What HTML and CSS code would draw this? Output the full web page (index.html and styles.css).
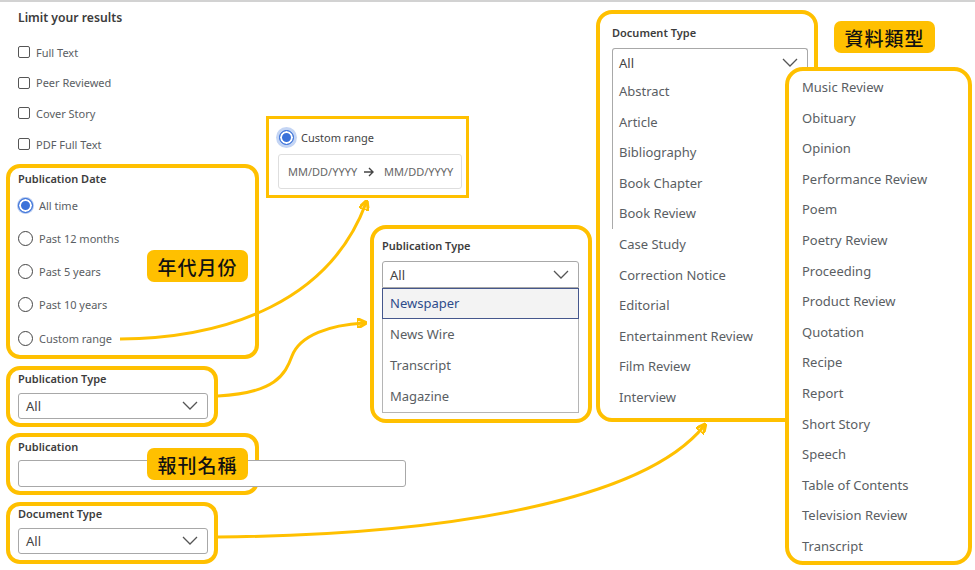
FILE: index.html
```html
<!DOCTYPE html>
<html>

<head>
    <title>Limit your results</title>
    <link rel="stylesheet" href="styles.css">
</head>

<body>
    <div class="page">
        <div class="filters">
            <h3 class="title">Limit your results</h3>
            <ul class="checks">
                <li><span class="check"></span>Full Text</li>
                <li><span class="check"></span>Peer Reviewed</li>
                <li><span class="check"></span>Cover Story</li>
                <li><span class="check"></span>PDF Full Text</li>
            </ul>

            <div class="mark date-box">
                <div class="field-label">Publication Date</div>
                <ul class="radios">
                    <li><span class="radio on"></span>All time</li>
                    <li><span class="radio"></span>Past 12 months</li>
                    <li><span class="radio"></span>Past 5 years</li>
                    <li><span class="radio"></span>Past 10 years</li>
                    <li><span class="radio"></span>Custom range</li>
                </ul>
            </div>

            <div class="mark type-box">
                <div class="field-label">Publication Type</div>
                <div class="select">All
                    <svg class="chev" viewBox="0 0 16 9"><path d="M1 1l7 7 7-7" /></svg>
                </div>
            </div>

            <div class="mark pub-box">
                <div class="field-label">Publication</div>
                <div class="text-input"></div>
            </div>

            <div class="mark doc-box">
                <div class="field-label">Document Type</div>
                <div class="select">All
                    <svg class="chev" viewBox="0 0 16 9"><path d="M1 1l7 7 7-7" /></svg>
                </div>
            </div>
        </div>

        <!-- callouts -->
        <div class="popup range-pop">
            <div class="range-head"><span class="radio on halo"></span>Custom range</div>
            <div class="range-input">
                <span>MM/DD/YYYY</span>
                <svg class="to" viewBox="0 0 10 10"><path d="M0 5h9M5 1l4 4-4 4" /></svg>
                <span>MM/DD/YYYY</span>
            </div>
        </div>

        <div class="popup ptype-pop">
            <div class="field-label">Publication Type</div>
            <div class="select">All
                <svg class="chev" viewBox="0 0 16 9"><path d="M1 1l7 7 7-7" /></svg>
            </div>
            <ul class="opts">
                <li class="active">Newspaper</li>
                <li>News Wire</li>
                <li>Transcript</li>
                <li>Magazine</li>
            </ul>
        </div>

        <div class="popup dtype-pop">
            <div class="field-label">Document Type</div>
            <div class="select open">All
                <svg class="chev" viewBox="0 0 16 9"><path d="M1 1l7 7 7-7" /></svg>
            </div>
            <ul class="doc-list edged">
                <li>Abstract</li>
                <li>Article</li>
                <li>Bibliography</li>
                <li>Book Chapter</li>
                <li>Book Review</li>
            </ul>
            <ul class="doc-list">
                <li>Case Study</li>
                <li>Correction Notice</li>
                <li>Editorial</li>
                <li>Entertainment Review</li>
                <li>Film Review</li>
                <li>Interview</li>
            </ul>
        </div>

        <div class="popup more-pop">
            <ul class="doc-list">
                <li>Music Review</li>
                <li>Obituary</li>
                <li>Opinion</li>
                <li>Performance Review</li>
                <li>Poem</li>
                <li>Poetry Review</li>
                <li>Proceeding</li>
                <li>Product Review</li>
                <li>Quotation</li>
                <li>Recipe</li>
                <li>Report</li>
                <li>Short Story</li>
                <li>Speech</li>
                <li>Table of Contents</li>
                <li>Television Review</li>
                <li>Transcript</li>
            </ul>
        </div>

        <span class="tag tag-date">年代月份</span>
        <span class="tag tag-pub">報刊名稱</span>
        <span class="tag tag-doc">資料類型</span>

        <svg class="arrows" viewBox="0 0 975 570">
            <defs>
                <marker id="head" viewBox="0 0 10 10" refX="7" refY="5" markerWidth="3.4" markerHeight="3.4" orient="auto">
                    <path d="M0 0L10 5L0 10z" fill="#ffc000" />
                </marker>
            </defs>
            <path d="M120 339C230 338 330 300 366 203" marker-end="url(#head)" />
            <path d="M218 396C275 393 285 375 292 356C300 335 330 325 364 323" marker-end="url(#head)" />
            <path d="M218 537C430 535 640 505 704 426" marker-end="url(#head)" />
        </svg>
    </div>
</body>

</html>
```

FILE: styles.css
```css
body {
    margin: 0;
    background-color: #fff;
    font-family: "Noto Sans", "Open Sans", sans-serif;
    color: #5a5e63;
}

ul {
    list-style: none;
    margin: 0;
    padding: 0;
}

.page {
    position: relative;
    width: 975px;
    height: 570px;
    overflow: hidden;
    box-shadow: inset 0 2px 0 #d2d2d2;
}

/* left column */

.filters {
    width: 420px;
    padding: 10px 0 0 6px;
}

.title {
    margin: 0 0 0 12px;
    font-size: 12.2px;
    line-height: 16px;
    font-weight: 600;
    color: #3c3c3c;
}

.checks {
    margin: 11px 0 0 12px;
}

.checks li,
.radios li {
    display: flex;
    align-items: center;
    font-size: 11px;
}

.checks li {
    height: 30.6px;
}

.radios li {
    height: 33.25px;
}

.check {
    width: 12px;
    height: 12px;
    margin-right: 6px;
    border: 1.5px solid #555;
    border-radius: 2px;
    box-sizing: border-box;
}

.radio {
    width: 15px;
    height: 15px;
    margin-right: 6px;
    border: 1.5px solid #444;
    border-radius: 50%;
    box-sizing: border-box;
    flex-shrink: 0;
}

.radio.on {
    border-color: #3b72d9;
    background-color: #3b72d9;
    box-shadow: inset 0 0 0 2px #fff, 0 0 0 1px #b3c8f0;
}

.radio.halo {
    box-shadow: inset 0 0 0 2px #fff, 0 0 0 3px #c4d5f4;
}

.field-label {
    font-size: 11px;
    line-height: 14px;
    font-weight: 600;
    color: #3d3d3d;
}

.mark {
    border: 4px solid #ffc000;
    border-radius: 14px;
    background-color: #fff;
    box-sizing: border-box;
}

.date-box {
    width: 253px;
    margin-top: 5px;
    padding: 4px 8px 0;
}

.date-box .field-label {
    margin-bottom: 2px;
}

.type-box {
    width: 212px;
    margin-top: 7px;
    padding: 2px 6px 4px 8px;
}

.type-box .field-label,
.doc-box .field-label {
    margin-bottom: 7px;
}

.pub-box {
    width: 253px;
    margin-top: 6px;
    padding: 3px 8px 4px;
}

.pub-box .field-label {
    margin-bottom: 6px;
}

.doc-box {
    width: 212px;
    margin-top: 7px;
    padding: 1px 6px 6px 8px;
}

.select {
    display: flex;
    align-items: center;
    justify-content: space-between;
    height: 26px;
    padding: 0 9px 0 7px;
    border: 1px solid #a8a8a8;
    border-radius: 3px;
    box-sizing: border-box;
    background-color: #fff;
    font-size: 13px;
    color: #444;
}

.chev {
    width: 16px;
    height: 9px;
    fill: none;
    stroke: #555;
    stroke-width: 1.3;
}

.text-input {
    width: 388px;
    height: 27px;
    border: 1px solid #a8a8a8;
    border-radius: 3px;
    box-sizing: border-box;
    background-color: #fff;
}

/* callouts */

.popup {
    position: absolute;
    background-color: #fff;
    border: 4px solid #ffc000;
    border-radius: 16px;
    box-sizing: border-box;
}

.range-pop {
    left: 266px;
    top: 116px;
    width: 203px;
    height: 82px;
    padding: 10px 7px 0 10px;
    border-width: 3px;
    border-radius: 0;
}

.range-head {
    display: flex;
    align-items: center;
    height: 16px;
    font-size: 11px;
    color: #444;
}

.range-head .radio {
    margin-right: 7px;
}

.range-input {
    display: flex;
    align-items: center;
    width: 184px;
    height: 35px;
    margin: 9px 0 0 -1px;
    padding-left: 9px;
    border: 1px solid #dedede;
    border-radius: 3px;
    box-sizing: border-box;
    font-size: 11px;
    color: #666;
    white-space: nowrap;
    overflow: hidden;
}

.range-input .to {
    width: 10px;
    height: 10px;
    margin: 0 10px 0 7px;
    fill: none;
    stroke: #444;
    stroke-width: 1.4;
    flex-shrink: 0;
}

.ptype-pop {
    left: 370px;
    top: 225px;
    width: 222px;
    height: 198px;
    padding: 10px 9px 0 8px;
}

.ptype-pop .field-label {
    margin-bottom: 8px;
}

.ptype-pop .select {
    height: 27px;
    border-radius: 3px 3px 0 0;
}

.opts {
    border: 1px solid #b5b5b5;
    border-top: none;
}

.opts li {
    height: 31px;
    line-height: 31px;
    padding-left: 7px;
    font-size: 13px;
}

.opts li.active {
    margin: 0 -1px;
    padding-left: 7px;
    border: 1.5px solid #45578c;
    background-color: #f3f3f3;
    box-sizing: border-box;
    line-height: 28px;
    color: #2e4c8b;
}

.dtype-pop {
    left: 596px;
    top: 10px;
    width: 222px;
    height: 412px;
    padding: 12px 6px 0 12px;
}

.dtype-pop .field-label {
    margin-bottom: 8px;
}

.select.open {
    height: 28px;
    padding-left: 6px;
    border-bottom: none;
    border-radius: 3px 3px 0 0;
}

.doc-list li {
    height: 30.6px;
    line-height: 30.6px;
    padding-left: 7px;
    font-size: 13px;
    white-space: nowrap;
}

.doc-list.edged {
    border-left: 1px solid #aaa;
}

.doc-list.edged li {
    padding-left: 6px;
}

.more-pop {
    left: 785px;
    top: 67px;
    width: 187px;
    height: 498px;
    padding: 1px 0 0 13px;
    border-radius: 18px;
}

.more-pop .doc-list li {
    padding-left: 0;
}

/* annotation tags */

.tag {
    position: absolute;
    display: flex;
    align-items: center;
    justify-content: center;
    width: 101px;
    height: 32px;
    border-radius: 7px;
    background-color: #ffc000;
    font-family: "Noto Sans CJK TC", "Noto Sans CJK SC", sans-serif;
    font-size: 19px;
    font-weight: 500;
    letter-spacing: 1px;
    color: #111;
}

.tag-date {
    left: 147px;
    top: 250px;
}

.tag-pub {
    left: 147px;
    top: 448px;
}

.tag-doc {
    left: 834px;
    top: 21px;
}

.arrows {
    position: absolute;
    left: 0;
    top: 0;
    width: 975px;
    height: 570px;
    pointer-events: none;
}

.arrows path {
    fill: none;
    stroke: #ffc000;
    stroke-width: 3;
}
```
